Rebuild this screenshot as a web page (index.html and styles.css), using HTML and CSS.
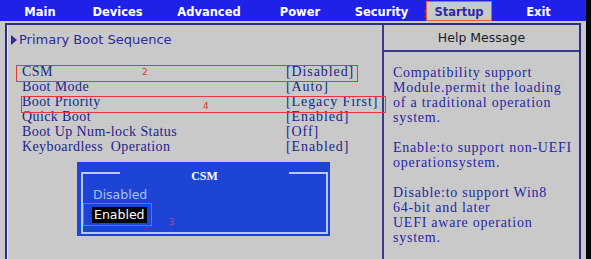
FILE: index.html
```html
<!DOCTYPE html>
<html>
<head>
<meta charset="utf-8">
<link rel="stylesheet" href="styles.css">
</head>
<body>
<div class="screen">
  <div class="main">
    <nav class="tabs">
      <span class="tab">Main</span>
      <span class="tab">Devices</span>
      <span class="tab">Advanced</span>
      <span class="tab">Power</span>
      <span class="tab">Security<span class="note note-tab">1</span></span>
      <span class="tab active">Startup</span>
      <span class="tab">Exit</span>
    </nav>
    <div class="frame">
      <section class="left">
        <div class="section-title"><span class="tri"></span>Primary Boot Sequence</div>
        <ul class="items">
          <li class="row"><span class="label">CSM</span><span class="value">[Disabled]</span></li>
          <li class="row"><span class="label">Boot Mode</span><span class="value">[Auto]</span></li>
          <li class="row"><span class="label">Boot Priority</span><span class="value">[Legacy First]</span></li>
          <li class="row"><span class="label">Quick Boot</span><span class="value">[Enabled]</span></li>
          <li class="row"><span class="label">Boot Up Num-lock Status</span><span class="value">[Off]</span></li>
          <li class="row"><span class="label">Keyboardless&nbsp; Operation</span><span class="value">[Enabled]</span></li>
        </ul>
        <div class="mark mark-csm"><span class="note">2</span></div>
        <div class="mark mark-prio"><span class="note">4</span></div>
        <div class="popup">
          <div class="popup-frame">
            <div class="popup-title"><span class="pline"></span><span class="ptext">CSM</span><span class="pline"></span></div>
            <div class="opt">Disabled</div>
            <div class="opt-row"><span class="opt-box"><span class="opt sel">Enabled</span></span><span class="note note-pop">3</span></div>
          </div>
        </div>
      </section>
      <aside class="right">
        <div class="help-head">Help Message</div>
        <div class="help-body">
          <p>Compatibility support<br>Module.permit the loading<br>of a traditional operation<br>system.</p>
          <p>Enable:to support non-UEFI<br>operationsystem.</p>
          <p>Disable:to support Win8<br>64-bit and later<br>UEFI aware operation<br>system.</p>
        </div>
      </aside>
    </div>
  </div>
  <div class="edge"></div>
</div>
</body>
</html>
```
FILE: styles.css
```css
html, body {
  margin: 0;
  padding: 0;
  background: #c9c9c9;
  overflow: hidden;
}
.screen {
  display: flex;
  width: 591px;
  height: 259px;
}
.main {
  width: 586px;
  display: flex;
  flex-direction: column;
  background: #c9c9c9;
}
.edge {
  flex: 1;
  background: #050505;
}
.tabs {
  display: grid;
  grid-template-columns: 80px 75px 108px 74px 89px 66px 93px;
  height: 21px;
  background: #1f22e6;
  align-items: center;
}
.tab {
  position: relative;
  text-align: center;
  color: #ffffff;
  font-family: "DejaVu Sans", sans-serif;
  font-weight: bold;
  font-size: 11.5px;
  line-height: 21px;
  padding-top: 2px;
  height: 21px;
  box-sizing: border-box;
}
.tab.active {
  background: #c9c9c9;
  color: #2a2aa8;
  border: 1px solid #e8603c;
  height: 20px;
  line-height: 18px;
  padding-top: 1px;
  align-self: end;
}
.note {
  color: #e03030;
  font-family: "DejaVu Sans", sans-serif;
  font-size: 8px;
  font-weight: normal;
}
.note-tab {
  position: absolute;
  right: -2px;
  top: 4px;
}
.frame {
  margin: 2px 5px 0 5px;
  flex: 1;
  border: 2px solid #2c2c8c;
  border-bottom: none;
  display: flex;
  box-shadow: inset 1px 0 0 #e8e8f0;
}
.left {
  position: relative;
  width: 375px;
  border-right: 2px solid #3a3a8a;
}
.section-title {
  margin-top: 8px;
  margin-left: 4px;
  display: flex;
  align-items: center;
  font-family: "DejaVu Sans", sans-serif;
  font-size: 13px;
  color: #2b2b9c;
  line-height: 14px;
}
.tri {
  width: 0;
  height: 0;
  border-top: 5px solid transparent;
  border-bottom: 5px solid transparent;
  border-left: 6px solid #2b2b9c;
  margin-right: 2px;
}
.items {
  list-style: none;
  margin: 17px 0 0 0;
  padding: 0 0 0 15px;
  font-family: "Liberation Serif", serif;
  font-size: 14px;
  letter-spacing: 0.4px;
  color: #1e1e8c;
}
.row {
  display: flex;
  height: 15px;
  line-height: 15px;
}
.label {
  width: 264px;
  white-space: pre;
}
.value {
  letter-spacing: 0.9px;
}
.mark {
  position: absolute;
  border: 1px solid #e23a36;
  height: 15px;
}
.mark .note {
  position: absolute;
  top: 1px;
  font-size: 9px;
}
.mark-csm {
  left: 9px;
  top: 40px;
  width: 340px;
}
.mark-csm .note { left: 125px; }
.mark-prio {
  left: 14px;
  top: 71px;
  width: 363px;
}
.mark-prio .note { left: 181px; top: 4px; }
.popup {
  position: absolute;
  left: 70px;
  top: 137px;
  width: 253px;
  height: 74px;
  background: #1e44d6;
  padding: 10px 2px 2px 4px;
  box-sizing: border-box;
}
.popup-frame {
  height: 100%;
  border: 2px solid #b8c8f4;
  border-top: none;
  box-sizing: border-box;
  position: relative;
}
.popup-title {
  display: flex;
  align-items: flex-start;
  margin-left: -2px;
  margin-right: -2px;
}
.pline {
  width: 39px;
  height: 2px;
  background: #b8c8f4;
}
.ptext {
  flex: 1;
  text-align: center;
  font-family: "Liberation Serif", serif;
  font-weight: bold;
  font-size: 12px;
  color: #ffffff;
  line-height: 10px;
  margin-top: -1px;
}
.opt {
  font-family: "DejaVu Sans", sans-serif;
  font-size: 12.5px;
  color: #a9c0f2;
  margin-left: 10px;
  line-height: 16px;
  margin-top: 6px;
}
.opt-row {
  display: flex;
  align-items: flex-end;
  margin-top: 0;
}
.opt-box {
  border: 1px solid #b8509a;
  padding: 1px 4px 2px 8px;
  margin-left: 0;
}
.opt.sel {
  display: inline-block;
  margin: 0;
  background: #000000;
  color: #ffffff;
  padding: 0 2px;
  line-height: 16px;
}
.note-pop {
  color: #b04aa0;
  margin-left: 17px;
  margin-bottom: -1px;
  font-size: 9px;
}
.right {
  flex: 1;
  display: flex;
  flex-direction: column;
}
.help-head {
  height: 25px;
  border-bottom: 2px solid #3a3a8a;
  text-align: center;
  font-family: "DejaVu Sans", sans-serif;
  font-size: 12.5px;
  color: #1a1a2a;
  line-height: 26px;
}
.help-body {
  padding: 13px 0 0 9px;
  font-family: "Liberation Serif", serif;
  font-size: 14px;
  letter-spacing: 0.75px;
  color: #2626a6;
  line-height: 15px;
  white-space: nowrap;
}
.help-body p {
  margin: 0 0 15px 0;
}
```
